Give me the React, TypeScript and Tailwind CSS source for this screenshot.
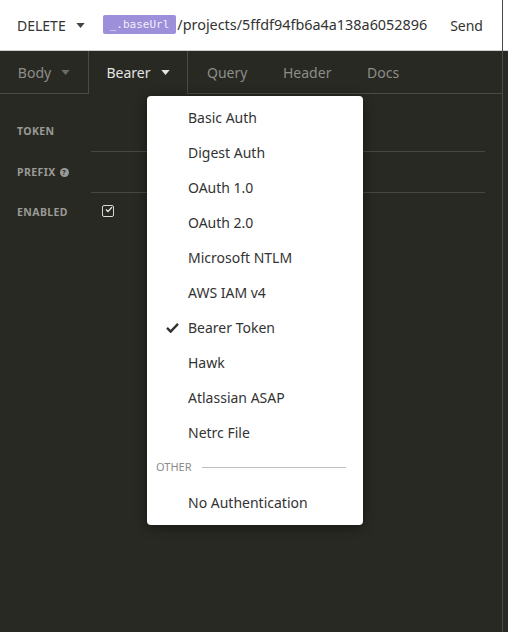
import * as React from "react";

const authTypes = [
  "Basic Auth",
  "Digest Auth",
  "OAuth 1.0",
  "OAuth 2.0",
  "Microsoft NTLM",
  "AWS IAM v4",
  "Bearer Token",
  "Hawk",
  "Atlassian ASAP",
  "Netrc File",
];

function Caret({ className }: { className?: string }) {
  return (
    <svg viewBox="0 0 10 6" className={className} aria-hidden>
      <path d="M0 0h10L5 6z" fill="currentColor" />
    </svg>
  );
}

function Check() {
  return (
    <svg viewBox="0 0 14 12" className="h-[11px] w-[13px]" aria-hidden>
      <path d="M1 6.5l4 4L13 2" fill="none" stroke="#333" strokeWidth="2.6" />
    </svg>
  );
}

function FieldLabel({ children }: { children: React.ReactNode }) {
  return (
    <div className="flex w-[91px] shrink-0 items-center gap-1 pl-[17px] text-[10.5px] font-bold tracking-[0.4px] text-[#9a9a96]">
      {children}
    </div>
  );
}

export default function App() {
  return (
    <div
      className="relative flex h-[632px] w-[508px] overflow-hidden bg-[#282923]"
      style={{ fontFamily: '"Noto Sans", "Open Sans", sans-serif' }}
    >
      <div className="flex w-[503px] shrink-0 flex-col border-r border-[#4a4a46]">
        {/* url bar */}
        <div className="flex h-[51px] items-center border-b border-[#cfcfcf] bg-white text-[14px] text-[#333]">
          <div className="flex items-center gap-[10px] pl-[17px]">
            <span>DELETE</span>
            <Caret className="h-[5px] w-[9px] text-[#444]" />
          </div>
          <div className="ml-[18px] flex items-center">
            <span
              className="flex h-[19px] items-center rounded-[2px] bg-[#9d8fd9] px-[7px] text-[11px] text-[#f2f0fb]"
              style={{ fontFamily: '"DejaVu Sans Mono", monospace' }}
            >
              _.baseUrl
            </span>
            <span className="ml-[1px] text-[14.4px]">/projects/5ffdf94fb6a4a138a6052896</span>
          </div>
          <span className="ml-auto pr-[19px]">Send</span>
        </div>

        {/* tabs */}
        <div className="flex h-[43px] text-[14px]">
          <div className="flex w-[89px] items-center justify-center gap-[10px] border-r border-b border-[#4a4a46] text-[#8d8d89]">
            Body
            <Caret className="h-[5px] w-[9px] text-[#6a6a66]" />
          </div>
          <div className="flex w-[99px] items-center justify-center gap-[10px] border-r border-[#4a4a46] text-[#e4e4e2]">
            Bearer
            <Caret className="h-[5px] w-[9px] text-[#e4e4e2]" />
          </div>
          <div className="flex flex-1 items-center border-b border-[#4a4a46] pl-[19px] text-[#8d8d89]">
            <span className="w-[76px]">Query</span>
            <span className="w-[84px]">Header</span>
            <span>Docs</span>
          </div>
        </div>

        {/* fields */}
        <div className="flex flex-col pt-[18px]">
          <div className="flex h-[40px] items-center">
            <FieldLabel>TOKEN</FieldLabel>
            <div className="mr-[17px] h-full flex-1 border-b border-[#474743]" />
          </div>
          <div className="flex h-[41px] items-center">
            <FieldLabel>
              PREFIX
              <span className="flex h-[9px] w-[9px] items-center justify-center rounded-full bg-[#9a9a96] text-[7px] leading-none text-[#282923]">
                ?
              </span>
            </FieldLabel>
            <div className="mr-[17px] h-full flex-1 border-b border-[#474743]" />
          </div>
          <div className="flex h-[40px] items-center">
            <FieldLabel>ENABLED</FieldLabel>
            <div className="ml-[11px] -mt-[5px] flex h-[12px] w-[12px] items-center justify-center rounded-[2px] border border-[#d8d8d6]">
              <svg viewBox="0 0 12 10" className="ml-[2px] -mt-[2px] h-[9px] w-[11px]" aria-hidden>
                <path d="M1.5 5l3 3L10.5 1.5" fill="none" stroke="#e8e8e6" strokeWidth="2" />
              </svg>
            </div>
          </div>
        </div>
      </div>
      <div className="flex flex-1 flex-col">
        <div className="h-[51px] border-b border-[#cfcfcf] bg-white" />
      </div>

      {/* auth dropdown */}
      <div className="absolute left-[147px] top-[96px] w-[216px] rounded-[4px] bg-white pt-[4px] pb-[5px] text-[14px] text-[#333] shadow-[0_2px_12px_rgba(0,0,0,0.45)]">
        {authTypes.map((t) => (
          <div key={t} className="flex h-[35px] items-center">
            <div className="flex w-[41px] justify-end pr-[9px]">{t === "Bearer Token" && <Check />}</div>
            <span>{t}</span>
          </div>
        ))}
        <div className="flex h-[35px] items-center gap-[10px] pl-[9px] pr-[17px]">
          <span className="text-[11px] text-[#8a8a8a]">OTHER</span>
          <div className="h-px flex-1 bg-[#bdbdbd]" />
        </div>
        <div className="flex h-[35px] items-center pl-[41px]">No Authentication</div>
      </div>
    </div>
  );
}
